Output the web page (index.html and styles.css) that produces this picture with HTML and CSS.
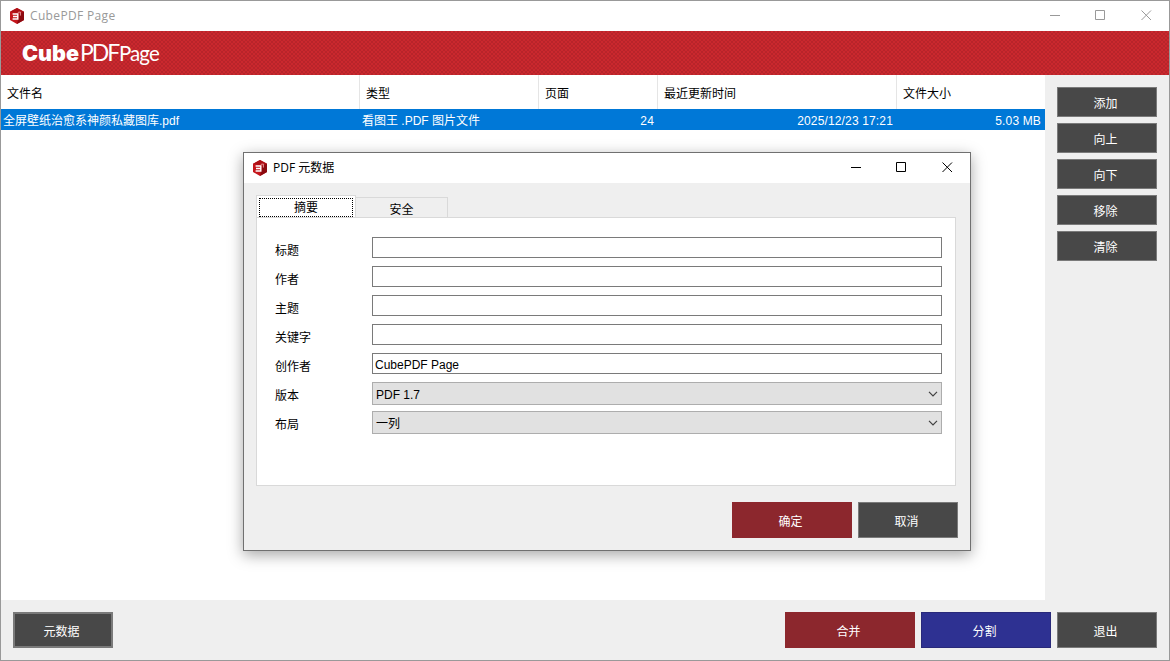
FILE: index.html
```html
<!DOCTYPE html>
<html lang="zh-CN">
<head>
  <meta charset="UTF-8">
  <meta name="viewport" content="width=device-width, initial-scale=1.0">
  <title>CubePDF Page</title>
  <link rel="stylesheet" href="styles.css">
</head>
<body>
  <svg class="defs" width="0" height="0">
    <symbol id="cube" viewBox="0 0 16 18">
      <path d="M8 1 L15 4.8 V13 L8 17 L1 13 V4.8 Z" fill="#c4161c"/>
      <path d="M8 1 L15 4.8 L10.5 6.5 L1 4.8 Z" fill="#ad1016"/>
      <path d="M10.5 6.5 L15 4.8 V13 L8 17 Z" fill="#8b0a10"/>
      <path d="M3.6 7 H8.8 V12 H3.6 M4 9.5 H8.8" fill="none" stroke="#fff" stroke-width="1.4"/>
      <path d="M8.8 5.4 L11.4 5 V8.6" fill="none" stroke="#e58d90" stroke-width="1"/>
    </symbol>
    <symbol id="win-min" viewBox="0 0 11 11"><path d="M0 5.5 H10" stroke="currentColor"/></symbol>
    <symbol id="win-max" viewBox="0 0 11 11"><path d="M.5 .5 H9.5 V9.5 H.5 Z" fill="none" stroke="currentColor"/></symbol>
    <symbol id="win-close" viewBox="0 0 11 11"><path d="M.5 .5 L10 10 M10 .5 L.5 10" stroke="currentColor"/></symbol>
    <symbol id="arrow" viewBox="0 0 10 6"><path d="M1 .8 L5 4.8 L9 .8" fill="none" stroke="#404040" stroke-width="1.2"/></symbol>
  </svg>

  <div class="window">
    <header class="titlebar">
      <svg class="app-icon"><use href="#cube"/></svg>
      <span class="caption">CubePDF Page</span>
      <div class="win-buttons">
        <svg><use href="#win-min"/></svg>
        <svg><use href="#win-max"/></svg>
        <svg><use href="#win-close"/></svg>
      </div>
    </header>

    <div class="banner">
      <span class="logo-cube">Cube</span>
      <span class="logo-pdf">PDF</span>
      <span class="logo-page">Page</span>
    </div>

    <main class="content">
      <div class="file-list">
        <div class="row head">
          <span>文件名</span>
          <span>类型</span>
          <span>页面</span>
          <span>最近更新时间</span>
          <span>文件大小</span>
        </div>
        <div class="row selected">
          <span>全屏壁纸治愈系神颜私藏图库.pdf</span>
          <span>看图王 .PDF 图片文件</span>
          <span class="num">24</span>
          <span class="num">2025/12/23 17:21</span>
          <span class="num">5.03 MB</span>
        </div>
      </div>
      <aside class="side">
        <button class="btn">添加</button>
        <button class="btn">向上</button>
        <button class="btn">向下</button>
        <button class="btn">移除</button>
        <button class="btn">清除</button>
      </aside>
    </main>

    <footer class="footer">
      <button class="btn meta">元数据</button>
      <button class="btn red merge">合并</button>
      <button class="btn blue">分割</button>
      <button class="btn exit">退出</button>
    </footer>
  </div>

  <div class="dialog">
    <header class="titlebar">
      <svg class="app-icon"><use href="#cube"/></svg>
      <span class="caption">PDF 元数据</span>
      <div class="win-buttons">
        <svg><use href="#win-min"/></svg>
        <svg><use href="#win-max"/></svg>
        <svg><use href="#win-close"/></svg>
      </div>
    </header>
    <div class="tabs">
      <div class="tab active"><span>摘要</span></div>
      <div class="tab">安全</div>
    </div>
    <div class="panel">
      <div class="field"><label>标题</label><input type="text"></div>
      <div class="field"><label>作者</label><input type="text"></div>
      <div class="field"><label>主题</label><input type="text"></div>
      <div class="field"><label>关键字</label><input type="text"></div>
      <div class="field"><label>创作者</label><input type="text" value="CubePDF Page"></div>
      <div class="field"><label>版本</label><div class="select"><span>PDF 1.7</span><svg><use href="#arrow"/></svg></div></div>
      <div class="field"><label>布局</label><div class="select"><span>一列</span><svg><use href="#arrow"/></svg></div></div>
    </div>
    <div class="actions">
      <button class="btn red ok">确定</button>
      <button class="btn">取消</button>
    </div>
  </div>
</body>
</html>
```
FILE: styles.css
```css
* {
  box-sizing: border-box;
}
body {
  margin: 0;
  width: 1170px;
  height: 661px;
  overflow: hidden;
  font-family: "Liberation Sans", "Noto Sans CJK SC", sans-serif;
  font-size: 12px;
  color: #000;
}
.defs {
  position: absolute;
}
.window {
  height: 661px;
  border: 1px solid #999;
  background: #efefef;
  display: flex;
  flex-direction: column;
}
.titlebar {
  height: 30px;
  flex: none;
  display: flex;
  align-items: center;
  background: #fff;
  padding-left: 8px;
  font-family: "Open Sans", "Noto Sans CJK SC", sans-serif;
}
.app-icon {
  width: 16px;
  height: 18px;
  margin-bottom: 1px;
}
.caption {
  margin-left: 5px;
  line-height: 16px;
}
.win-buttons {
  margin-left: auto;
  display: flex;
  gap: 34px;
  padding: 0 17px 1px 0;
}
.win-buttons svg {
  width: 11px;
  height: 11px;
}
.win-buttons svg:last-child {
  margin-left: 1px;
}
.window > .titlebar {
  color: #999;
}
.window > .titlebar .caption {
  letter-spacing: 0.35px;
}
.banner {
  height: 44px;
  flex: none;
  display: flex;
  align-items: baseline;
  background-color: #ca282e;
  background-image: radial-gradient(circle at 1px 1px, #b8242a 1px, transparent 1.5px),
    radial-gradient(circle at 3px 3px, #b8242a 1px, transparent 1.5px);
  background-size: 4px 4px;
  padding-left: 21px;
  color: #fff;
  font-family: Lato, sans-serif;
  line-height: 42px;
}
.logo-cube {
  width: 58px;
  font-family: Inter, sans-serif;
  font-size: 21.5px;
  font-weight: 900;
  letter-spacing: 0;
}
.logo-pdf {
  width: 39px;
  font-size: 23px;
  letter-spacing: -2px;
}
.logo-page {
  font-size: 20.5px;
  letter-spacing: -0.9px;
}
.content {
  flex: 1;
  display: flex;
}
.file-list {
  width: 1044px;
  background: #fff;
}
.row {
  display: grid;
  grid-template-columns: 359px 179px 119px 239px 148px;
}
.head span {
  height: 34px;
  line-height: 38px;
  padding-left: 6px;
  border-right: 1px solid #e5e5e5;
}
.head span:last-child {
  border-right: none;
}
.selected {
  background: #0078d7;
  color: #fff;
}
.selected span {
  height: 21px;
  line-height: 24px;
  padding: 0 4px 0 2px;
  white-space: nowrap;
}
.selected .num {
  text-align: right;
  letter-spacing: 0.15px;
}
.side {
  padding: 12px;
  display: flex;
  flex-direction: column;
  gap: 6px;
}
.btn {
  width: 100px;
  height: 30px;
  padding: 0 3px 0 0;
  border: 1px solid #7a7a7a;
  background: #484848;
  color: #fff;
  font: inherit;
}
.footer {
  height: 60px;
  padding: 0 12px;
  display: flex;
  align-items: center;
  gap: 6px;
}
.footer .btn,
.actions .btn {
  height: 36px;
}
.footer .meta {
  border: 2px solid #7a7a7a;
}
.btn.red {
  background: #8c272d;
  border-color: #8c272d;
}
.btn.blue {
  width: 130px;
  background: #2e3192;
  border-color: #29297a;
}
.merge {
  width: 130px;
  margin-left: auto;
}
.dialog {
  position: absolute;
  left: 243px;
  top: 152px;
  width: 728px;
  height: 399px;
  border: 1px solid #707070;
  background: #efefef;
  box-shadow: 0 4px 14px rgba(0, 0, 0, 0.35);
}
.tabs {
  display: flex;
  align-items: flex-end;
  padding: 12px 12px 0;
}
.tab {
  width: 92px;
  height: 20px;
  border: 1px solid #d9d9d9;
  border-left: none;
  border-bottom: none;
  text-align: center;
  line-height: 24px;
}
.tab.active {
  width: 100px;
  height: 22px;
  padding: 2px 2px 0;
  border-left: 1px solid #d9d9d9;
  background: #fff;
}
.tab.active span {
  display: block;
  height: 19px;
  line-height: 19px;
  border: 1px dotted #000;
}
.panel {
  width: 700px;
  height: 269px;
  margin-left: 12px;
  padding: 19px 13px 0 18px;
  border: 1px solid #d9d9d9;
  background: #fff;
}
.field {
  height: 29px;
  display: flex;
}
.field label {
  width: 97px;
  line-height: 28px;
}
.field input,
.select {
  width: 570px;
  height: 21px;
  border: 1px solid #7a7a7a;
  padding: 2px 2px 0;
  font: inherit;
}
.select {
  height: 23px;
  border-color: #adadad;
  background: #e1e1e1;
  padding: 0 3px;
  display: flex;
  justify-content: space-between;
  line-height: 24px;
}
.select svg {
  width: 10px;
  height: 6px;
  margin-top: 8px;
}
.actions {
  display: flex;
  justify-content: flex-end;
  gap: 6px;
  padding: 16px 12px 0 0;
}
.actions .ok {
  width: 120px;
}
```
